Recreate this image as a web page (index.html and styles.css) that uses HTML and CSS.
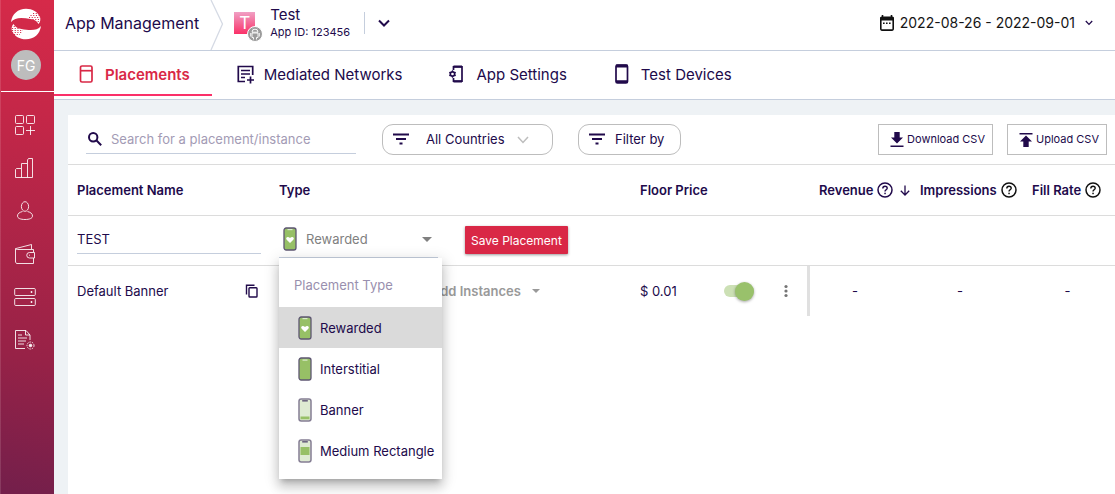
FILE: index.html
```html
<!DOCTYPE html>
<html lang="en">
<head>
<meta charset="utf-8">
<meta name="viewport" content="width=device-width, initial-scale=1">
<title>App Management</title>
<link rel="stylesheet" href="styles.css">
</head>
<body>
<svg class="defs" aria-hidden="true">
  <symbol id="help" viewBox="0 0 16 16"><circle cx="8" cy="8" r="7" fill="none" stroke="currentColor" stroke-width="1.5"/><path d="M5.8 6.4c0-1.3 1-2.2 2.2-2.2s2.2.8 2.2 2c0 1.500-2.200 1.700-2.200 3.300" fill="none" stroke="currentColor" stroke-width="1.400"/><rect x="7.300" y="10.700" width="1.500" height="1.500" fill="currentColor"/></symbol>
  <symbol id="filter" viewBox="0 0 16 12"><path d="M0 1.500h16M3 6h10M6.500 10.500h3" stroke="currentColor" stroke-width="1.800" fill="none"/></symbol>
  <symbol id="chevron" viewBox="0 0 12 8"><path d="M1 1.500l5 5 5-5" fill="none" stroke="currentColor" stroke-width="2"/></symbol>
  <symbol id="caret" viewBox="0 0 10 5"><path d="M0 0h10L5 5z" fill="currentColor"/></symbol>
  <symbol id="phone-rewarded" viewBox="0 0 14 24"><rect x="1" y="1" width="12" height="22" rx="2.200" fill="#97c066" stroke="#5e5672" stroke-width="1.300"/><rect x="4.500" y="2" width="5" height="1.200" fill="#dcebce"/><path d="M7 16l-3.300-3.200c-1.700-2 .9-4.200 3.300-1.900 2.400-2.300 5-.1 3.300 1.900z" fill="#fff"/></symbol>
  <symbol id="phone-full" viewBox="0 0 14 24"><rect x="1" y="1" width="12" height="22" rx="2.200" fill="#97c066" stroke="#5e5672" stroke-width="1.300"/><rect x="4.500" y="2.500" width="5" height="1.200" fill="#dcebce"/></symbol>
  <symbol id="phone-banner" viewBox="0 0 14 24"><rect x="1" y="1" width="12" height="22" rx="2.200" fill="#deebd2" stroke="#857e94" stroke-width="1.500"/><rect x="4.200" y="2" width="5.600" height="1.600" fill="#6d6680"/><rect x="2.500" y="18.500" width="9" height="2.800" fill="#97c066"/></symbol>
  <symbol id="phone-medium" viewBox="0 0 14 24"><rect x="1" y="1" width="12" height="22" rx="2.200" fill="#deebd2" stroke="#857e94" stroke-width="1.500"/><rect x="4.200" y="2" width="5.600" height="1.600" fill="#6d6680"/><rect x="2.500" y="8" width="9" height="8" fill="#97c066"/></symbol>
</svg>
<div class="app">
  <aside class="sidebar">
    <div class="brand">
      <a href="#" aria-label="Home"><svg class="logo" width="32" height="32" viewBox="0 0 32 32">
        <path d="M1 14C2 6 8 .7 16 .7c6.500 0 11.500 3 14 8.300 .8 2.500 .3 5-1.500 7-1.500-3-4.500-4.500-8-5C12 9.500 5 9 1 14z" fill="#fff"/>
        <path d="M31 18c-1 8-7 13.300-15 13.300-6.500 0-11.500-3-14-8.300-.8-2.500-.3-5 1.500-7 1.500 3 4.500 4.500 8 5C20 22.500 27 23 31 18z" fill="#fff"/>
        <g fill="none" stroke="#d32a49" stroke-width="1.100" stroke-dasharray="1.100 1.600"><path d="M23 5.500h7M20.500 7.500h9.500M19 9.500h11M22.500 11.500h8M25 13.500h6"/><path d="M1 18.500h6M2 20.500h8M2 22.500h11M2 24.500h9.500M4 26.500h6"/></g>
      </svg></a>
      <button class="avatar" type="button">FG</button>
    </div>
    <nav class="side-nav" aria-label="Main">
      <a href="#" aria-label="Dashboards"><svg viewBox="0 0 22 22"><rect x="1.500" y="1.500" width="8" height="8" rx="1"/><rect x="12.500" y="1.500" width="8" height="8" rx="1"/><rect x="1.500" y="12.500" width="8" height="8" rx="1"/><path d="M16.500 12v9M12 16.500h9"/></svg></a>
      <a href="#" aria-label="Reports"><svg viewBox="0 0 22 22"><path d="M1.500 20.500v-8l1-1H7M7.500 20.500V6.500H13M13.500 20.500V3l1-1.500h4V20.500H1.500"/></svg></a>
      <a href="#" aria-label="Users"><svg viewBox="0 0 22 22"><ellipse cx="11" cy="6.500" rx="3.600" ry="4.800"/><path d="M8.500 11.500c-3 .8-5 2-5 4.500 0 2.300 3 3.500 7.500 3.500s7.500-1.200 7.500-3.500c0-2.500-2-3.700-5-4.500"/></svg></a>
      <a href="#" aria-label="Wallet"><svg viewBox="0 0 22 22"><path d="M19.500 9V6.500H3.500C2 6.500 1.500 6 1.500 5.500V19l1 1.500H19.500V15M2 5.500L17.500 1.500V6"/><path d="M20.500 9.500h-5a2.700 2.700 0 0 0 0 5.500h5zM15 12.200h1"/></svg></a>
      <a href="#" aria-label="Instances"><svg viewBox="0 0 22 22"><rect x=".7" y="2.500" width="20.600" height="7" rx="1"/><rect x=".7" y="12.500" width="20.600" height="7" rx="1"/><path d="M16.500 6h2M17.500 5v2M16.500 16h2M17.500 15v2"/></svg></a>
      <a href="#" aria-label="Report settings"><svg viewBox="0 0 22 22"><path d="M11 19.500H1.500v-18h10.500l4 4.500V11M11.500 1.500V6H16M4 6h4M4 9h9M4 12h8M4 15h6"/><circle cx="16.500" cy="16.500" r="3.500" stroke-dasharray="1.500 1"/><circle cx="16.500" cy="16.500" r="1.300" fill="#fff"/></svg></a>
    </nav>
  </aside>

  <div class="page">
    <header class="topbar">
      <h1>App Management</h1>
      <svg class="crumb" viewBox="0 0 14 50" aria-hidden="true"><path d="M1 0L12.500 24 1 50" fill="none" stroke="#d5dae4" stroke-width="1.300"/></svg>
      <span class="app-icon">T<svg class="platform" viewBox="0 0 16 16" aria-hidden="true"><circle cx="8" cy="8" r="7.500" fill="#9b9b9b" stroke="#fff"/><path d="M5 6.200a3 3 0 0 1 6 0zM5 7h6v4.500H9.500V13.500M6.500 13.500V11.500H5V7M3.700 7v3.500M12.300 7v3.500M5.800 2.800l.8 1M10.200 2.800l-.8 1" fill="none" stroke="#fff" stroke-width=".9"/></svg></span>
      <div class="app-name"><strong>Test</strong><span>App ID: 123456</span></div>
      <button class="app-switch" type="button" aria-label="Switch app"><svg width="12" height="8"><use href="#chevron"/></svg></button>
      <button class="dates" type="button">
        <svg width="16" height="16" viewBox="0 0 16 16" aria-hidden="true"><path d="M3.500 0v3M12.500 0v3" stroke="#111" stroke-width="1.600"/><rect x="1.800" y="2.300" width="12.400" height="12.800" rx="1" fill="none" stroke="#111" stroke-width="1.600"/><path d="M1.500 2h13v3.500h-13z" fill="#111"/><path d="M4 8.300h8" stroke="#111" stroke-width="1.500" stroke-dasharray="1.600 1.400"/></svg>
        <span>2022-08-26 - 2022-09-01</span>
        <svg class="dates-chevron" width="8" height="6" viewBox="0 0 8 6" aria-hidden="true"><path d="M.8 1L4 4.400 7.200 1" fill="none" stroke="currentColor" stroke-width="1.300"/></svg>
      </button>
    </header>

    <nav class="tabs" aria-label="App sections">
      <a class="tab active" href="#" aria-current="page"><svg viewBox="0 0 20 20"><rect x="4.500" y="2" width="11.500" height="16" rx="1.500"/><path d="M4.500 6.700H16"/></svg>Placements</a>
      <a class="tab" href="#"><svg viewBox="0 0 20 20"><path d="M10 17.500H3.300V2.500h14.400V11M6 6.500h9M6 10h9M6 13.500h4M15.500 12.500v7M12 16h7"/></svg>Mediated Networks</a>
      <a class="tab" href="#"><svg viewBox="0 0 20 20"><path d="M6.500 6V2.800H15v14.400H6.500V14"/><path d="M6.500 2.500H15M6.500 17.500H15" stroke-width="2.200"/><circle cx="5.500" cy="10" r="2.200"/><path d="M5.500 6.300v1.500M5.500 12.200v1.500M2.300 8.200l1.200.7M2.300 11.800l1.200-.7M8.700 8.200l-1.200.7M8.700 11.800l-1.200-.7" stroke-width="1.300"/></svg>App Settings</a>
      <a class="tab" href="#"><svg viewBox="0 0 20 20"><rect x="4" y="1" width="11.500" height="18" rx="1.500"/><path d="M4 2h11.500M4 17.700h11.500" stroke-width="2.800"/></svg>Test Devices</a>
    </nav>

    <main class="content">
      <section class="panel">
        <div class="toolbar">
          <label class="search">
            <svg width="14" height="14" viewBox="0 0 14 14" aria-hidden="true"><circle cx="5.200" cy="5.200" r="4.200"/><path d="M8.300 8.300l4.900 4.900"/></svg>
            <input type="search" placeholder="Search for a placement/instance" aria-label="Search for a placement/instance">
          </label>
          <div class="pill countries">
            <svg width="16" height="12"><use href="#filter"/></svg>
            <select aria-label="Countries"><option>All Countries</option></select>
            <svg class="pill-chevron" width="12" height="8" viewBox="0 0 12 8"><path d="M1 1l5 5.500L11 1"/></svg>
          </div>
          <button class="pill" type="button"><svg width="16" height="12"><use href="#filter"/></svg>Filter by</button>
          <div class="exports">
            <button class="export" type="button"><svg width="14" height="16" viewBox="0 0 14 16"><path d="M4.300 0h5.400v5.500H13L7 11.500 1 5.500h3.300zM.5 13.500h13v1.600H.5z"/></svg>Download CSV</button>
            <button class="export" type="button"><svg width="14" height="16" viewBox="0 0 14 16"><path d="M.5 1h13v1.600H.5zM7 3.500l6 6H9.700V15H4.300V9.500H1z"/></svg>Upload CSV</button>
          </div>
        </div>

        <table class="placements">
          <colgroup><col class="c-name"><col class="c-type"><col class="c-floor"><col class="c-actions"><col class="c-revenue"><col class="c-impressions"><col class="c-fill"></colgroup>
          <thead>
            <tr>
              <th scope="col">Placement Name</th>
              <th scope="col">Type</th>
              <th scope="col">Floor Price</th>
              <td></td>
              <th scope="col"><span class="metric">Revenue <svg><use href="#help"/></svg><svg class="sort" viewBox="0 0 10 11"><path d="M5 .5v9.500M.8 5.800L5 10l4.200-4.200" fill="none" stroke="currentColor" stroke-width="1.300"/></svg></span></th>
              <th scope="col"><span class="metric black">Impressions <svg><use href="#help"/></svg></span></th>
              <th scope="col"><span class="metric black">Fill Rate <svg><use href="#help"/></svg></span></th>
            </tr>
          </thead>
          <tbody>
            <tr class="editing">
              <td><input class="name-input" type="text" value="TEST" aria-label="Placement name"></td>
              <td colspan="6">
                <div class="type-edit">
                  <div class="type-field">
                    <svg class="phone"><use href="#phone-rewarded"/></svg>
                    <select aria-label="Placement type"><option>Rewarded</option><option>Interstitial</option><option>Banner</option><option>Medium Rectangle</option></select>
                    <svg class="caret"><use href="#caret"/></svg>
                    <ul class="menu" role="listbox" aria-label="Placement Type">
                      <li class="menu-title" role="presentation">Placement Type</li>
                      <li class="selected" role="option" aria-selected="true"><svg class="phone"><use href="#phone-rewarded"/></svg>Rewarded</li>
                      <li role="option" aria-selected="false"><svg class="phone"><use href="#phone-full"/></svg>Interstitial</li>
                      <li role="option" aria-selected="false"><svg class="phone"><use href="#phone-banner"/></svg>Banner</li>
                      <li role="option" aria-selected="false"><svg class="phone"><use href="#phone-medium"/></svg>Medium Rectangle</li>
                    </ul>
                  </div>
                  <button class="save" type="button">Save Placement</button>
                </div>
              </td>
            </tr>
            <tr class="saved">
              <td><div class="name-cell">Default Banner<button type="button" aria-label="Copy placement"><svg width="14" height="14" viewBox="0 0 14 14"><path d="M1.500 10.500V1.200H9.500"/><rect x="4" y="3.700" width="8" height="9.300" rx=".8"/></svg></button></div></td>
              <td><button class="add" type="button">Add Instances<svg class="caret small"><use href="#caret"/></svg></button></td>
              <td class="floor">$ 0.01</td>
              <td><div class="actions"><input class="toggle" type="checkbox" checked aria-label="Placement active"><button type="button" aria-label="More actions"><svg width="4" height="14" viewBox="0 0 4 14"><circle cx="2" cy="2.500" r="1.600"/><circle cx="2" cy="7" r="1.600"/><circle cx="2" cy="11.500" r="1.600"/></svg></button></div></td>
              <td class="value">-</td>
              <td class="value">-</td>
              <td class="value last">-</td>
            </tr>
          </tbody>
        </table>
      </section>
    </main>
  </div>
</div>
</body>
</html>
```

FILE: styles.css
```css
:root {
  --ink: #210a4b;
  --red: #d92846;
  --line: #dcdcdc;
  --line-blue: #c5cedd;
  --green: #99c16b;
}
* { box-sizing: border-box; }
body {
  margin: 0;
  font-family: Inter, "Liberation Sans", sans-serif;
  font-size: 13px;
  color: var(--ink);
  background: #eef2f5;
}
button, input, select { font: inherit; color: inherit; margin: 0; }
button { background: none; border: 0; padding: 0; cursor: pointer; }
a { color: inherit; text-decoration: none; }
svg { display: block; flex: none; }
.defs { position: absolute; width: 0; height: 0; }

.app { display: flex; min-height: 100vh; }

/* Sidebar */
.sidebar {
  flex: none;
  width: 54px;
  border-left: 1px solid rgba(255, 255, 255, .12);
  background: linear-gradient(192deg, #d62a49 0%, #c62748 22%, #972247 72%, #731f4b 100%);
}
.brand {
  display: flex;
  flex-direction: column;
  align-items: center;
  gap: 10px;
  height: 92px;
  padding: 8px 3px 0 0;
  border-bottom: 1px solid #fff;
}
.avatar {
  width: 30px;
  height: 30px;
  border-radius: 50%;
  background: #bdbdbd;
  color: #fff;
  font-size: 14px;
}
.side-nav {
  display: flex;
  flex-direction: column;
  align-items: center;
  gap: 21px;
  padding: 22px 5px 0 0;
}
.side-nav svg {
  width: 22px;
  height: 22px;
  fill: none;
  stroke: #fff;
  stroke-width: 1;
  stroke-opacity: .85;
}

/* Top bar */
.page { flex: 1; min-width: 0; display: flex; flex-direction: column; }
.topbar {
  display: flex;
  align-items: center;
  height: 51px;
  padding: 0 22px 0 11px;
  background: #fff;
  border-bottom: 1px solid var(--line-blue);
}
h1 { margin: 0; padding-bottom: 4px; font-size: 16px; font-weight: 400; }
.crumb { width: 14px; height: 50px; margin-left: 11px; }
.app-icon {
  position: relative;
  width: 21px;
  height: 22px;
  margin: 0 15px 5px 10px;
  background: linear-gradient(#f0a0c4, #fa3168);
  color: #fff;
  font-size: 17px;
  line-height: 22px;
  text-align: center;
}
.platform { position: absolute; right: -8px; bottom: -8px; width: 16px; height: 16px; }
.app-name { display: grid; padding-bottom: 5px; }
.app-name strong { font-size: 15px; line-height: 18px; font-weight: 400; }
.app-name span { font-size: 11px; line-height: 16px; }
.app-switch {
  height: 22px;
  margin: 0 0 5px 14px;
  padding: 0 13px;
  border-left: 1px solid var(--line-blue);
}
.dates {
  display: flex;
  align-items: center;
  gap: 5px;
  margin-left: auto;
  padding-bottom: 5px;
  font-size: 14px;
  color: #151515;
}
.dates-chevron { margin-left: 5px; color: var(--ink); }

/* Tabs */
.tabs {
  display: flex;
  gap: 1px;
  height: 49px;
  background: #fff;
  border-bottom: 1px solid var(--line-blue);
}
.tab {
  display: flex;
  align-items: center;
  gap: 9px;
  height: 45px;
  padding: 3px 22px 0;
  border-bottom: 2px solid transparent;
  font-size: 15px;
}
.tab svg { width: 20px; height: 20px; fill: none; stroke: currentColor; stroke-width: 1.7; }
.tab.active { color: var(--red); border-color: #fb3069; font-weight: 600; }

/* Panel */
.content { flex: 1; display: flex; padding: 15px 0 0 14px; }
.panel { flex: 1; min-width: 0; background: #fff; }
.toolbar {
  display: flex;
  align-items: center;
  height: 50px;
  padding: 0 8px 0 18px;
  border-bottom: 1px solid var(--line);
}
.search {
  display: flex;
  align-items: center;
  gap: 9px;
  width: 270px;
  height: 28px;
  margin-right: 26px;
  padding-left: 2px;
  border-bottom: 1px solid var(--line-blue);
}
.search svg { fill: none; stroke: var(--ink); stroke-width: 2; }
.search input { flex: 1; min-width: 0; border: 0; padding: 0; background: none; outline: 0; }
.search input::placeholder { color: #a39bb5; opacity: 1; }
.pill {
  display: flex;
  align-items: center;
  gap: 10px;
  height: 31px;
  margin-right: 25px;
  padding: 0 16px 2px 10px;
  border: 1px solid #bdbdbd;
  border-radius: 11px;
}
.countries { width: 171px; gap: 17px; }
.countries select, .type-field select {
  appearance: none;
  flex: 1;
  min-width: 0;
  border: 0;
  padding: 0;
  background: none;
  outline: 0;
}
.pill-chevron { margin: 2px 7px 0 -12px; fill: none; stroke: #bdbdbd; stroke-width: 1.5; }
.exports { display: flex; gap: 14px; margin-left: auto; }
.export {
  display: flex;
  align-items: center;
  gap: 3px;
  height: 31px;
  padding: 0 7px 2px 11px;
  border: 1px solid #bdbdbd;
  font-size: 11px;
}
.export svg { margin-top: 2px; fill: var(--ink); }

/* Placements table */
.placements { width: 100%; border-collapse: separate; border-spacing: 0; table-layout: fixed; }
.c-name { width: 202px; }
.c-floor { width: 84px; }
.c-actions { width: 95px; }
.c-revenue { width: 101px; }
.c-impressions { width: 109px; }
.c-fill { width: 95px; }
.placements th, .placements td { padding: 0 0 0 9px; text-align: left; }
.placements th { font-weight: 600; white-space: nowrap; }
.placements thead th, .placements thead td, .editing td { border-bottom: 1px solid var(--line); }
.placements thead th, .placements thead td { height: 51px; }
.placements th:last-child { padding-left: 12px; }
.metric { display: flex; align-items: center; gap: 4px; }
.metric svg { width: 16px; height: 16px; color: var(--ink); }
.metric .sort { width: 10px; height: 11px; margin-left: 3px; }
.metric.black svg { color: #111; }
.placements .editing td { height: 50px; vertical-align: top; }
.name-input {
  display: block;
  width: 184px;
  height: 38px;
  border: 0;
  border-bottom: 1px solid var(--line-blue);
  padding: 8px 0 0;
  outline: 0;
}
.type-edit { display: flex; align-items: flex-start; gap: 27px; height: 43px; }
.type-field {
  position: relative;
  display: flex;
  align-items: center;
  gap: 9px;
  width: 159px;
  height: 42px;
  padding: 5px 6px 0 4px;
  border-bottom: 1px solid var(--line-blue);
  color: #808080;
}
.phone { width: 14px; height: 24px; }
.caret { width: 10px; height: 5px; }
.caret.small { width: 8px; height: 4px; }
.menu {
  position: absolute;
  z-index: 1;
  top: 42px;
  left: 0;
  width: 163px;
  margin: 0;
  padding: 5px 0 8px;
  list-style: none;
  background: #fff;
  color: var(--ink);
  box-shadow: 0 5px 5px -3px rgba(0, 0, 0, .2), 0 8px 10px 1px rgba(0, 0, 0, .14), 0 3px 14px 2px rgba(0, 0, 0, .12);
}
.menu li {
  display: flex;
  align-items: center;
  gap: 8px;
  height: 41px;
  padding-left: 19px;
  white-space: nowrap;
}
.menu .menu-title { height: 44px; padding-left: 15px; color: #998fae; }
.menu .selected { background: #dadada; }
.save {
  height: 28px;
  margin-top: 10px;
  padding: 0 6px;
  border-radius: 1px;
  background: var(--red);
  color: #fff;
  font-size: 12px;
  box-shadow: 0 1px 3px rgba(0, 0, 0, .4);
}
.placements .saved td { height: 50px; }
.name-cell { display: flex; align-items: center; justify-content: space-between; padding-right: 11px; }
.name-cell svg { fill: none; stroke: var(--ink); stroke-width: 1.4; }
.add {
  display: flex;
  align-items: center;
  gap: 11px;
  margin-left: 152px;
  color: #999;
  font-weight: 600;
}
.actions { display: flex; align-items: center; gap: 30px; }
.actions svg { fill: #757575; }
.toggle {
  appearance: none;
  display: flex;
  align-items: center;
  justify-content: flex-end;
  width: 30px;
  height: 12px;
  border-radius: 6px;
  background: #cce0b5;
}
.toggle::before {
  content: "";
  width: 19px;
  height: 19px;
  border-radius: 50%;
  background: var(--green);
  box-shadow: 0 1px 3px rgba(0, 0, 0, .35);
}
.placements .saved td:nth-child(4) { border-right: 3px solid #e0e0e0; }
.placements .saved .value { padding: 0 11px 0 0; text-align: center; }
.placements .saved .last { padding-right: 0; }
```
